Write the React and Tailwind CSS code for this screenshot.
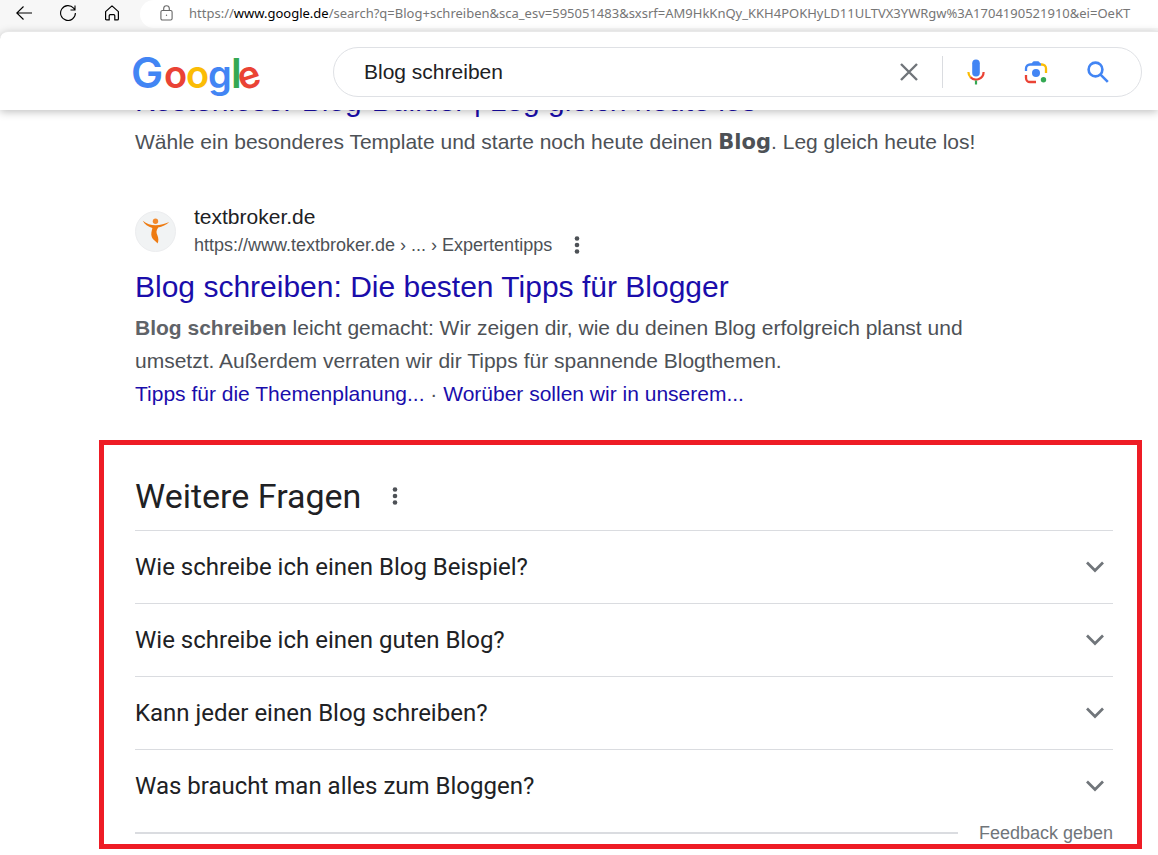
import { useState } from "react";

const LINK = "text-[#1a0dab] hover:underline";

const questions = [
  "Wie schreibe ich einen Blog Beispiel?",
  "Wie schreibe ich einen guten Blog?",
  "Kann jeder einen Blog schreiben?",
  "Was braucht man alles zum Bloggen?",
];

function Dots() {
  return (
    <svg width="6" height="20" viewBox="0 0 6 20" fill="#4d5156" aria-hidden="true">
      <circle cx="3" cy="3.500" r="2.300" />
      <circle cx="3" cy="10" r="2.300" />
      <circle cx="3" cy="16.500" r="2.300" />
    </svg>
  );
}

function BrowserBar() {
  return (
    <div className="flex h-[31px] items-start bg-[#f7f7f7] pl-4 text-black">
      <div className="flex h-[26px] shrink-0 items-center gap-7">
        <button aria-label="Zurück">
          <svg width="16" height="16" viewBox="0 0 16 16" fill="none" stroke="currentColor" strokeWidth="1.1">
            <path d="M7.5 1.5L0.8 8l6.7 6.5M1 8h15" />
          </svg>
        </button>
        <button aria-label="Aktualisieren">
          <svg width="16" height="16" viewBox="0 0 16 16" fill="none" stroke="currentColor" strokeWidth="1.1">
            <path d="M15.4 8A7.4 7.4 0 1 1 13.6 3.2L15 5M15 0.5V5h-4.5" />
          </svg>
        </button>
        <button aria-label="Startseite">
          <svg width="16" height="16" viewBox="0 0 16 16" fill="none" stroke="currentColor" strokeWidth="1.2" strokeLinejoin="round">
            <path d="M1.6 6.6L8 0.9l6.4 5.7v7.3q0 1-1 1h-2.6v-4.2q0-1-1-1H6.200q-1 0-1 1v4.200H2.600q-1 0-1-1z" />
          </svg>
        </button>
      </div>
      <div className="ml-5 flex h-7 min-w-0 flex-1 items-center gap-4 overflow-hidden rounded-l-full bg-white pb-0.5 pl-5">
        <svg className="shrink-0" width="13" height="16" viewBox="0 0 13 16" fill="none" stroke="#666" strokeWidth="1.1" aria-hidden="true">
          <rect x="0.900" y="5.500" width="11.200" height="9.500" rx="1.500" />
          <path d="M3.700 5.500V3.500a2.800 2.800 0 0 1 5.600 0v2" />
          <circle cx="6.500" cy="10.200" r="0.700" fill="#666" stroke="none" />
        </svg>
        <span className="whitespace-nowrap font-['Noto_Sans',sans-serif] text-[13px] leading-5 text-[#767676]">
          https://<span className="text-black">www.google.de</span>/search?q=Blog+schreiben&amp;sca_esv=595051483&amp;sxsrf=AM9HkKnQy_KKH4POKHyLD11ULTVX3YWRgw%3A1704190521910&amp;ei=OeKT
        </span>
      </div>
    </div>
  );
}

function GoogleLogo() {
  return (
    <svg width="128" height="56" viewBox="0 0 128 56" role="img" aria-label="Google" fontFamily="Inter, sans-serif" fontWeight="600" fontSize="38">
      <text x="-1" y="42" fontSize="43" fill="#4285f4">G</text>
      <text x="32" y="42" fill="#ea4335">o</text>
      <text x="54" y="42" fill="#fbbc05">o</text>
      <text x="76" y="42" fill="#4285f4">g</text>
      <text x="99" y="42" fontSize="41" fill="#34a853">l</text>
      <text x="106" y="42" fill="#ea4335" transform="rotate(-18 117 32)">e</text>
    </svg>
  );
}

function SearchHeader() {
  const [query, setQuery] = useState("Blog schreiben");
  return (
    <header className="relative z-10 bg-[#f7f7f7]">
      <div className="flex h-[79px] items-center rounded-tl-lg border-t border-[#e8e8e8] bg-white pl-[132px] pr-4 shadow-[0_2px_8px_rgba(0,0,0,0.25)]">
        <a href="#google" className="mr-[73px] mt-1.5 shrink-0">
          <GoogleLogo />
        </a>
        <form
          className="mt-0.5 flex h-[50px] min-w-0 flex-1 items-center rounded-full border border-[#dfe1e5] pl-[30px] pr-8"
          onSubmit={(e) => e.preventDefault()}
        >
          <input
            aria-label="Suche"
            className="min-w-0 flex-1 bg-transparent text-[21px] text-[#202124] outline-none"
            value={query}
            onChange={(e) => setQuery(e.target.value)}
          />
          <button type="button" aria-label="Löschen" onClick={() => setQuery("")}>
            <svg width="18" height="18" viewBox="0 0 18 18" fill="none" stroke="#70757a" strokeWidth="2.400">
              <path d="M1 1l16 16M17 1L1 17" />
            </svg>
          </button>
          <span className="ml-6 mr-6 h-8 w-px bg-[#dadce0]" />
          <button type="button" aria-label="Sprachsuche" className="mr-[39px]">
            <svg width="18" height="26" viewBox="0 0 18 26">
              <rect x="5.200" y="0.500" width="7.600" height="17" rx="3.800" fill="#4285f4" />
              <path d="M1.400 13a7.600 7.600 0 0 0 2.300 5.400" fill="none" stroke="#fbbc05" strokeWidth="2.200" />
              <path d="M3.500 18.200A7.600 7.600 0 0 0 16.600 13" fill="none" stroke="#ea4335" strokeWidth="2.200" />
              <path d="M7.900 21.500h2.200v4H7.900z" fill="#34a853" />
            </svg>
          </button>
          <button type="button" aria-label="Bildersuche" className="mr-[39px]">
            <svg width="24" height="24" viewBox="0 0 24 24" fill="none" strokeWidth="2.300">
              <path d="M2 11V8.500a4 4 0 0 1 4-4h11" stroke="#4285f4" />
              <path d="M7 4.500l1.700-2.600Q9.200 1.200 10 1.200h4q.800 0 1.300.700L17 4.500z" fill="#4285f4" />
              <path d="M17 4.500h1a4 4 0 0 1 4 4V13" stroke="#fbbc05" />
              <path d="M2 15v3a4 4 0 0 0 4 4h6" stroke="#ea4335" />
              <circle cx="12" cy="13" r="4" fill="#4285f4" />
              <circle cx="19.500" cy="19.800" r="2.700" fill="#34a853" />
            </svg>
          </button>
          <button type="submit" aria-label="Suchen">
            <svg width="22" height="22" viewBox="0 0 22 22" fill="none" stroke="#4285f4" strokeWidth="2.600">
              <circle cx="8.500" cy="8.500" r="6.900" />
              <path d="M13.300 13.300l7.500 7.500" />
            </svg>
          </button>
        </form>
      </div>
    </header>
  );
}

function Results() {
  return (
    <section className="pl-[135px] pr-4 text-[21px] leading-[33px] text-[#4d5156]">
      <article>
        <h3 className="-mt-[29px] text-3xl leading-10">
          <a href="#builder" className={LINK}>Kostenloser Blog-Builder | Leg gleich heute los</a>
        </h3>
        <p className="mt-1">
          Wähle ein besonderes Template und starte noch heute deinen <b className="font-['DejaVu_Sans',sans-serif] font-black leading-none">Blog</b>. Leg gleich heute los!
        </p>
      </article>
      <article className="mt-[45px] max-w-[850px]">
        <div className="flex items-center gap-[18px]">
          <span className="flex size-[41px] items-center justify-center rounded-full border border-[#ecedef] bg-[#f1f3f4]">
            <svg width="28" height="28" viewBox="0 0 28 28" aria-hidden="true">
              <circle cx="13.500" cy="4.200" r="2.700" fill="#f28a2e" />
              <path d="M0.800 3.800C4.500 7 9 8.200 13.500 8.200C18.500 8.200 23 6.800 27.200 5C24.500 8 20 9.600 16.200 10.400C14 13.500 14.200 15.500 15.300 18C16.600 21 16.800 24 15.600 26.500C14.500 24.500 11.300 23.500 9.800 20C8.600 17 9.800 13.800 10.400 11C6 9.600 2.500 7.600 0.800 3.800Z" fill="#ee7b12" />
            </svg>
          </span>
          <div>
            <div className="leading-7 text-[#202124]">textbroker.de</div>
            <div className="flex items-center gap-[22px] text-lg leading-7">
              <span>https://www.textbroker.de › ... › Expertentipps</span>
              <button aria-label="Über dieses Ergebnis"><Dots /></button>
            </div>
          </div>
        </div>
        <h3 className="mt-2 text-3xl leading-10">
          <a href="#textbroker" className={LINK}>Blog schreiben: Die besten Tipps für Blogger</a>
        </h3>
        <p className="mt-1">
          <b className="text-[#5f6368]">Blog schreiben</b> leicht gemacht: Wir zeigen dir, wie du deinen Blog erfolgreich planst und umsetzt. Außerdem verraten wir dir Tipps für spannende Blogthemen.
        </p>
        <div>
          <a href="#themen" className={LINK}>Tipps für die Themenplanung...</a>
          {" · "}
          <a href="#worueber" className={LINK}>Worüber sollen wir in unserem...</a>
        </div>
      </article>
    </section>
  );
}

function Questions() {
  const [open, setOpen] = useState(null);
  return (
    <section className="ml-[99px] mr-4 mt-[30px] border-[5px] border-[#ee1c25] pl-[31px] pr-6 font-['Roboto',sans-serif] text-[#202124]">
      <div className="flex items-center gap-[31px] pb-[14px] pt-[31px]">
        <h2 className="text-[34px] leading-10">Weitere Fragen</h2>
        <button aria-label="Über Weitere Fragen"><Dots /></button>
      </div>
      {questions.map((q, i) => (
        <button
          key={q}
          aria-expanded={open === i}
          onClick={() => setOpen(open === i ? null : i)}
          className="flex h-[73px] w-full items-center justify-between border-t border-[#dadce0] pr-2 text-left text-2xl"
        >
          {q}
          <svg width="20" height="12" viewBox="0 0 20 12" fill="none" stroke="#70757a" strokeWidth="2.700" aria-hidden="true">
            <path d="M2 1.500l8 8 8-8" />
          </svg>
        </button>
      ))}
      <div className="flex h-[22px] items-center gap-[21px]">
        <span className="h-[2px] flex-1 bg-[#dadce0]" />
        <a href="#feedback" className="font-['Liberation_Sans',Arial,sans-serif] text-lg leading-[22px] text-[#70757a]">Feedback geben</a>
      </div>
    </section>
  );
}

export default function App() {
  return (
    <div className="min-h-screen bg-white font-['Liberation_Sans',Arial,sans-serif]">
      <BrowserBar />
      <SearchHeader />
      <main>
        <Results />
        <Questions />
      </main>
    </div>
  );
}
